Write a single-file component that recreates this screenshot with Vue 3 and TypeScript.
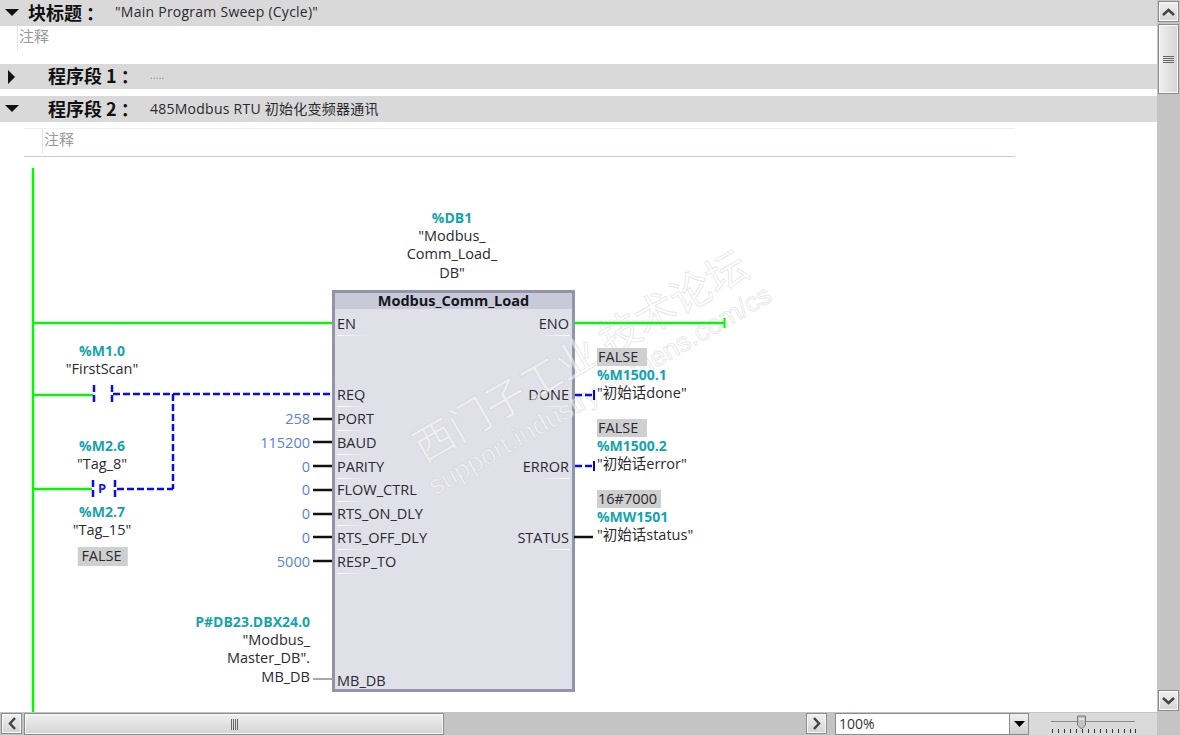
<template>
  <div class="editor">
    <div class="main">
      <div class="sheet">
        <div class="band band-title">
          <svg class="caret" width="14" height="8" viewBox="0 0 14 8"><path d="M0 0H14L7 7Z" /></svg>
          <span class="band-name">块标题 ：</span>
          <span class="band-text">"Main Program Sweep (Cycle)"</span>
        </div>
        <div class="block-comment"><span class="comment">注释</span></div>

        <div class="band band-net1">
          <svg class="caret" width="8" height="14" viewBox="0 0 8 14"><path d="M0 0V14L7 7Z" /></svg>
          <span class="band-name net">程序段 1 ：</span>
          <span class="band-text dots">.....</span>
        </div>
        <div class="band band-net2">
          <svg class="caret" width="14" height="8" viewBox="0 0 14 8"><path d="M0 0H14L7 7Z" /></svg>
          <span class="band-name net">程序段 2 ：</span>
          <span class="band-text">485Modbus RTU 初始化变频器通讯</span>
        </div>
        <div class="net-comment"><span class="comment">注释</span></div>

        <div class="canvas">
          <svg class="wires" width="1157" height="555" viewBox="0 157 1157 555">
            <g fill="none">
              <path class="live" d="M33 168V712M34 323H332M34 395H93M34 489H92M574 323H724" />
              <path d="M724.500 318V328" stroke="#10f010" stroke-width="2" />
              <path class="sig" d="M113 394H332M173 394V489M117 489H173M575 395H594M575 466H594" />
              <path class="sig" d="M94 385V402M112 385V402M93 480V498M115 480V498" />
              <path d="M594 390V400M594 461V471" stroke="#0000e0" stroke-width="2" />
              <path class="stub" d="M574 537H593" />
              <path v-for="y in stubs" :key="y" class="stub" :d="`M313 ${y}H332`" />
              <path d="M313 679H332" stroke="#a8a8a8" stroke-width="2" />
            </g>
          </svg>
          <span class="edge-p">P</span>

          <div
            v-for="(n, i) in operands"
            :key="i"
            class="operand"
            :class="n.align"
            :style="{ left: n.x + 'px', top: n.y - 157 + 'px' }"
          >
            <div v-for="l in n.lines" :key="l.t" :class="l.k">{{ l.t }}</div>
          </div>

          <div class="fb">
            <div class="fb-name">Modbus_Comm_Load</div>
            <div class="fb-pins">
              <span
                v-for="p in pins"
                :key="p.name"
                class="pin"
                :class="p.side"
                :style="{ gridRow: p.row + 1 }"
              >{{ p.name }}</span>
            </div>
          </div>

          <div class="mark mark-cn">西门子工业 技术论坛</div>
          <div class="mark mark-en">support.industry.siemens.com/cs</div>
        </div>
      </div>

      <div class="vbar">
        <button class="sb-btn">
          <svg width="13" height="8" viewBox="0 0 13 8"><path d="M1 7L6.500 2L12 7" /></svg>
        </button>
        <div class="thumb-v"><i></i><i></i><i></i><i></i></div>
        <div class="spacer"></div>
        <button class="sb-btn">
          <svg width="13" height="8" viewBox="0 0 13 8"><path d="M1 1L6.500 6L12 1" /></svg>
        </button>
      </div>
    </div>

    <div class="hbar">
      <button class="sb-btn">
        <svg width="8" height="13" viewBox="0 0 8 13"><path d="M7 1L2 6.500L7 12" /></svg>
      </button>
      <div class="thumb-h"><i></i><i></i><i></i><i></i></div>
      <div class="spacer"></div>
      <button class="sb-btn">
        <svg width="8" height="13" viewBox="0 0 8 13"><path d="M1 1L6 6.500L1 12" /></svg>
      </button>
      <div class="zoom-box">
        <span class="zoom-val">100%</span>
        <span class="zoom-drop">
          <svg width="11" height="6" viewBox="0 0 11 6"><path d="M0 0H11L5.500 6Z" /></svg>
        </span>
      </div>
      <div class="slider">
        <svg width="86" height="22" viewBox="0 0 86 22">
          <path d="M0 8.500H84" stroke="#8a8a8a" fill="none" />
          <path
            d="M1.500 16V20M7.500 16V20M13.500 16V20M19.500 16V20M25.500 16V20M31.500 16V20M37.500 16V20M43.500 16V20M49.500 16V20M55.500 16V20M61.500 16V20M67.500 16V20M73.500 16V20M79.500 16V20M84.500 16V20"
            stroke="#333"
            fill="none"
          />
          <path d="M26.500 3H34.500V12L30.500 16L26.500 12Z" fill="#c4c4c4" stroke="#777" />
          <path d="M28 6H33" stroke="#fff" fill="none" />
        </svg>
      </div>
      <div class="corner"></div>
    </div>
  </div>
</template>

<script setup lang="ts">
type Line = { t: string; k: string }
type Operand = { x: number; y: number; align: string; lines: Line[] }

const addr = (t: string): Line => ({ t, k: 'addr' })
const name = (t: string): Line => ({ t, k: 'name' })
const val = (t: string): Line => ({ t, k: 'val' })
const lit = (t: string): Line => ({ t, k: 'lit' })

const stubs = [419, 442, 466, 490, 514, 537, 561]

const operands: Operand[] = [
  { x: 452, y: 209, align: 'mid', lines: [addr('%DB1'), name('"Modbus_'), name('Comm_Load_'), name('DB"')] },
  { x: 102, y: 342, align: 'mid', lines: [addr('%M1.0'), name('"FirstScan"')] },
  { x: 102, y: 437, align: 'mid', lines: [addr('%M2.6'), name('"Tag_8"')] },
  { x: 102, y: 503, align: 'mid', lines: [addr('%M2.7'), name('"Tag_15"'), val('FALSE')] },
  { x: 310, y: 410, align: 'end', lines: [lit('258')] },
  { x: 310, y: 434, align: 'end', lines: [lit('115200')] },
  { x: 310, y: 458, align: 'end', lines: [lit('0')] },
  { x: 310, y: 481, align: 'end', lines: [lit('0')] },
  { x: 310, y: 505, align: 'end', lines: [lit('0')] },
  { x: 310, y: 529, align: 'end', lines: [lit('0')] },
  { x: 310, y: 553, align: 'end', lines: [lit('5000')] },
  {
    x: 310,
    y: 613,
    align: 'end',
    lines: [addr('P#DB23.DBX24.0'), name('"Modbus_'), name('Master_DB".'), name('MB_DB')],
  },
  { x: 597, y: 348, align: 'start', lines: [val('FALSE'), addr('%M1500.1'), name('"初始话done"')] },
  { x: 597, y: 419, align: 'start', lines: [val('FALSE'), addr('%M1500.2'), name('"初始话error"')] },
  { x: 597, y: 490, align: 'start', lines: [val('16#7000'), addr('%MW1501'), name('"初始话status"')] },
]

const pins = [
  { name: 'EN', side: 'in', row: 0 },
  { name: 'ENO', side: 'out', row: 0 },
  { name: 'REQ', side: 'in', row: 3 },
  { name: 'DONE', side: 'out', row: 3 },
  { name: 'PORT', side: 'in', row: 4 },
  { name: 'BAUD', side: 'in', row: 5 },
  { name: 'PARITY', side: 'in', row: 6 },
  { name: 'ERROR', side: 'out', row: 6 },
  { name: 'FLOW_CTRL', side: 'in', row: 7 },
  { name: 'RTS_ON_DLY', side: 'in', row: 8 },
  { name: 'RTS_OFF_DLY', side: 'in', row: 9 },
  { name: 'STATUS', side: 'out', row: 9 },
  { name: 'RESP_TO', side: 'in', row: 10 },
  { name: 'MB_DB', side: 'in', row: 15 },
]
</script>

<style>
html,
body {
  margin: 0;
  overflow: hidden;
}
</style>

<style scoped>
.editor {
  color: #2a2a30;
  display: flex;
  flex-direction: column;
  font-family: 'Open Sans', 'Noto Sans CJK SC', sans-serif;
  font-size: 14px;
  height: 735px;
  overflow: hidden;
  width: 1180px;
}

.main {
  display: flex;
  height: 712px;
}

.sheet {
  background: #fff;
  overflow: hidden;
  width: 1157px;
}

.band {
  align-items: center;
  background: #d9d9d9;
  box-sizing: border-box;
  display: flex;
  height: 26px;
  padding-bottom: 3px;
}

.caret {
  fill: #111;
  flex: none;
  margin-left: 5px;
  margin-top: 3px;
  width: 14px;
}

.band-name {
  color: #111;
  font-family: 'Noto Sans CJK SC', sans-serif;
  font-size: 18px;
  font-weight: 700;
  line-height: 20px;
  margin-left: 9px;
  white-space: nowrap;
  width: 87px;
}

.band-name.net {
  margin-left: 29px;
  width: 102px;
}

.band-text {
  letter-spacing: 0.25px;
  white-space: nowrap;
}

.dots {
  color: #888;
  font-size: 10px;
}

.block-comment {
  display: flex;
  height: 38px;
  padding-left: 17px;
}

.comment {
  border-left: 1px solid #e4e4e4;
  color: #9a9a9a;
  font-family: 'Noto Sans CJK SC', sans-serif;
  font-size: 15px;
  height: 25px;
  line-height: 20px;
  padding-left: 1px;
}

.band-net1 {
  height: 25px;
}

.band-net2 {
  margin-top: 7px;
}

.net-comment {
  border-bottom: 1px solid #c9c9e6;
  border-top: 1px solid #f0f0f0;
  display: flex;
  height: 27px;
  margin-left: 24px;
  margin-top: 6px;
  padding-left: 18px;
  width: 973px;
}

.canvas {
  font-size: 14.500px;
  height: 555px;
  position: relative;
}

.wires {
  left: 0;
  position: absolute;
  top: 0;
  z-index: 2;
}

.live {
  stroke: #10f010;
  stroke-width: 2.500;
}

.sig {
  stroke: #0a0af0;
  stroke-dasharray: 7 3;
  stroke-width: 2.500;
}

.stub {
  stroke: #111;
  stroke-width: 2.500;
}

.edge-p {
  color: #1a1ae0;
  font-size: 13px;
  font-weight: 700;
  left: 98px;
  position: absolute;
  top: 322px;
  z-index: 3;
}

.operand {
  display: flex;
  flex-direction: column;
  line-height: 18.200px;
  position: absolute;
  white-space: pre;
  z-index: 2;
}

.operand.mid {
  align-items: center;
  transform: translateX(-50%);
}

.operand.end {
  align-items: flex-end;
  transform: translateX(-100%);
}

.operand.start {
  align-items: flex-start;
}

.addr {
  color: #14a5ac;
  font-size: 14px;
  font-weight: 700;
}

.name {
  color: #2a2a30;
}

.lit {
  color: #5a7fdc;
}

.val {
  background: #cfcfcf;
  box-sizing: border-box;
  min-width: 50px;
  padding: 0 4px 0 1px;
}

.operand.mid .val {
  margin-left: 2px;
  margin-top: 8px;
  text-align: center;
}

.fb {
  background: #dfe0e8;
  border: 3px solid #9095aa;
  box-sizing: border-box;
  height: 402px;
  left: 332px;
  position: absolute;
  top: 133px;
  width: 243px;
}

.fb-name {
  background: #c8cad8;
  color: #16161c;
  font-size: 14.500px;
  font-weight: 700;
  height: 16px;
  line-height: 16px;
  text-align: center;
}

.fb-pins {
  display: grid;
  grid-template-columns: 1fr 1fr;
  grid-template-rows: repeat(16, 23.800px);
  margin-top: 4px;
}

.pin {
  align-self: center;
  background: linear-gradient(90deg, #fff, rgb(255 255 255 / 0)) bottom / 30px 1px no-repeat;
  line-height: 20px;
  padding-bottom: 2px;
  position: relative;
  white-space: nowrap;
}

.pin.in {
  background-position: left 2px bottom;
  grid-column: 1;
  padding-left: 2px;
}

.pin.out {
  background-image: linear-gradient(270deg, #fff, rgb(255 255 255 / 0));
  background-position: right 3px bottom;
  grid-column: 2;
  padding-right: 3px;
  text-align: right;
}

.mark {
  -webkit-text-stroke: 1px rgb(205 205 205 / 45%);
  color: rgb(255 255 255 / 55%);
  position: absolute;
  transform: rotate(-30deg);
  transform-origin: left bottom;
  white-space: nowrap;
  z-index: 1;
}

.mark-cn {
  font-family: 'Noto Sans CJK SC', sans-serif;
  font-size: 41px;
  left: 426px;
  line-height: 44px;
  top: 266px;
}

.mark-en {
  font-family: 'Liberation Sans', sans-serif;
  font-size: 27px;
  left: 438px;
  line-height: 30px;
  top: 314px;
}

.vbar {
  background: #c4c4c4;
  box-sizing: border-box;
  display: flex;
  flex-direction: column;
  padding: 1px;
  width: 23px;
}

.hbar {
  align-items: stretch;
  background: #c4c4c4;
  box-sizing: border-box;
  display: flex;
  height: 23px;
  padding-left: 1px;
  padding-top: 1px;
}

.sb-btn {
  align-items: center;
  background: linear-gradient(180deg, #f0f0f0, #d4d4d4);
  border: 1px solid #8c8c8c;
  box-shadow: inset 0 0 0 1px #f8f8f8;
  display: flex;
  flex: none;
  height: 21px;
  justify-content: center;
  margin: 0;
  padding: 0;
  width: 21px;
}

.sb-btn svg path {
  fill: none;
  stroke: #444;
  stroke-width: 2.500;
}

.thumb-v {
  align-items: center;
  background: linear-gradient(90deg, #f0f0f0, #d4d4d4);
  border: 1px solid #8c8c8c;
  box-shadow: inset 0 0 0 1px #f8f8f8;
  box-sizing: border-box;
  display: flex;
  flex-direction: column;
  gap: 1px;
  height: 70px;
  justify-content: center;
  margin-top: 2px;
}

.thumb-v i {
  background: #666;
  height: 1px;
  width: 11px;
}

.thumb-h {
  align-items: center;
  background: linear-gradient(180deg, #f0f0f0, #d4d4d4);
  border: 1px solid #8c8c8c;
  box-shadow: inset 0 0 0 1px #f8f8f8;
  box-sizing: border-box;
  display: flex;
  gap: 1px;
  justify-content: center;
  margin-left: 2px;
  width: 420px;
}

.thumb-h i {
  background: #666;
  height: 11px;
  width: 1px;
}

.spacer {
  flex: 1;
}

.zoom-box {
  align-items: stretch;
  background: #fff;
  border: 1px solid #8c8c8c;
  box-sizing: border-box;
  display: flex;
  flex: none;
  justify-content: space-between;
  margin-left: 8px;
  width: 194px;
}

.zoom-val {
  color: #333;
  line-height: 20px;
  padding-left: 3px;
}

.zoom-drop {
  align-items: center;
  background: linear-gradient(180deg, #f0f0f0, #d0d0d0);
  border-left: 1px solid #8c8c8c;
  display: flex;
  justify-content: center;
  width: 18px;
}

.slider {
  background: #dadada;
  flex: none;
  padding-left: 22px;
  width: 106px;
}

.corner {
  flex: none;
  width: 23px;
}
</style>
